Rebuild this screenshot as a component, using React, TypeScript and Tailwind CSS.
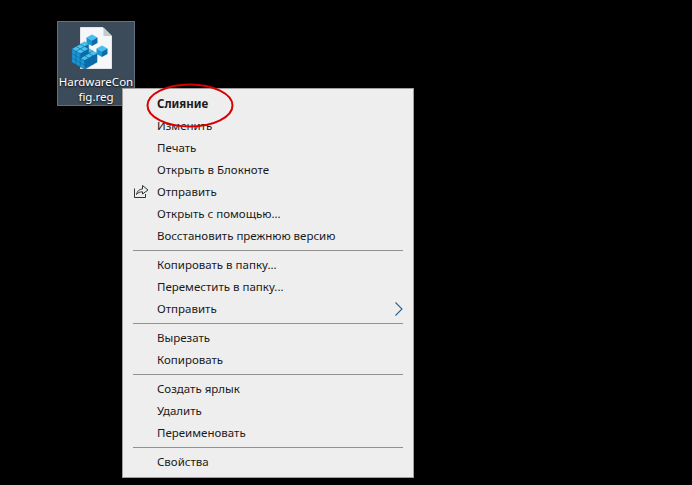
function Cube({ x, y }: { x: number; y: number }) {
  const w = 4.2
  const h = 2.4
  const v = 4.4
  return (
    <g stroke="#0a5e96" strokeWidth="0.3">
      <polygon points={`${x},${y - h} ${x + w},${y} ${x},${y + h} ${x - w},${y}`} fill="#49c3ee" />
      <polygon points={`${x - w},${y} ${x},${y + h} ${x},${y + h + v} ${x - w},${y + v}`} fill="#1b95d2" />
      <polygon points={`${x + w},${y} ${x},${y + h} ${x},${y + h + v} ${x + w},${y + v}`} fill="#0b6cab" />
    </g>
  )
}

function BigCube({ x, y }: { x: number; y: number }) {
  return (
    <g>
      <polygon points={`${x},${y - 3.5} ${x + 5.5},${y - 0.5} ${x},${y + 2.5} ${x - 5.5},${y - 0.5}`} fill="#43c0ee" />
      <polygon points={`${x - 5.5},${y - 0.5} ${x},${y + 2.5} ${x},${y + 8} ${x - 5.5},${y + 5}`} fill="#1b95d2" />
      <polygon points={`${x + 5.5},${y - 0.5} ${x},${y + 2.5} ${x},${y + 8} ${x + 5.5},${y + 5}`} fill="#0b6cab" />
    </g>
  )
}

const blocks: { a: number; b: number; z: number }[] = []
for (let z = 0; z < 3; z++) {
  for (let a = 0; a < 3; a++) {
    for (let b = 0; b < 3; b++) {
      // the top layer steps down towards the right, as in the registry logo
      if (z === 2 && a > 0 && !(a === 1 && b > 0)) continue
      blocks.push({ a, b, z })
    }
  }
}

function RegIcon() {
  return (
    <svg width="64" height="48" viewBox="0 0 64 48" className="block">
      <path d="M16.5 1.5H39L47.5 10V42.5H16.5Z" fill="#f5f7f9" stroke="#e3e6e9" />
      <path d="M39.5 2V10H47.5Z" fill="#c4cacf" />
      {blocks.map(({ a, b, z }) => (
        <Cube key={`${a}-${b}-${z}`} x={20.5 + (a - b) * 4.2} y={27 + (a + b) * 2.4 - z * 4.4} />
      ))}
      <BigCube x={28} y={12} />
      <BigCube x={38} y={23} />
    </svg>
  )
}

function ShareIcon() {
  return (
    <svg width="16" height="16" viewBox="0 0 16 16" fill="none" stroke="#333333" strokeWidth="1" className="block">
      <path d="M1.5 4.5V13.5H12.5V10" />
      <path d="M3.5 10.5C4 7 6.5 5.2 9.5 5V1.5L15 6L9.5 10V7.8C7 7.8 5 8.6 3.5 10.5Z" />
    </svg>
  )
}

function ArrowIcon() {
  return (
    <svg width="8" height="14" viewBox="0 0 8 14" fill="none" stroke="#2a628f" strokeWidth="1.1" className="ml-auto mr-[10px] block">
      <path d="M0.5 0.5L7 7L0.5 13.5" />
    </svg>
  )
}

function Item({ label, bold, icon, arrow }: { label: string; bold?: boolean; icon?: boolean; arrow?: boolean }) {
  return (
    <div className="flex h-[22px] items-center">
      <div className="w-[34px] pl-[10px]">{icon && <ShareIcon />}</div>
      <span className={bold ? "font-bold" : ""}>{label}</span>
      {arrow && <ArrowIcon />}
    </div>
  )
}

function Sep() {
  return <div className="mx-[10px] my-[3px] h-px bg-[#919191]" />
}

export default function App() {
  return (
    <div className="relative h-[485px] w-[692px] overflow-hidden bg-black font-['Noto_Sans','Open_Sans',sans-serif] text-[11.5px] text-[#1a1a1a]">
      {/* desktop icon */}
      <div className="absolute left-[57px] top-[21px] flex h-[85px] w-[78px] flex-col items-center border border-[#5f7285] bg-[#3c4b5a] pt-[4px]">
        <RegIcon />
        <div className="whitespace-nowrap text-center text-[11.5px] leading-[15px] text-white [text-shadow:0_1px_2px_rgba(0,0,0,0.9)]">
          <div>HardwareCon</div>
          <div>fig.reg</div>
        </div>
      </div>

      {/* context menu */}
      <div className="absolute left-[122px] top-[88px] w-[292px] border border-[#a0a0a0] bg-[#eeeeee] py-[4px]">
        <Item label="Слияние" bold />
        <Item label="Изменить" />
        <Item label="Печать" />
        <Item label="Открыть в Блокноте" />
        <Item label="Отправить" icon />
        <Item label="Открыть с помощью..." />
        <Item label="Восстановить прежнюю версию" />
        <Sep />
        <Item label="Копировать в папку..." />
        <Item label="Переместить в папку..." />
        <Item label="Отправить" arrow />
        <Sep />
        <Item label="Вырезать" />
        <Item label="Копировать" />
        <Sep />
        <Item label="Создать ярлык" />
        <Item label="Удалить" />
        <Item label="Переименовать" />
        <Sep />
        <Item label="Свойства" />
      </div>

      {/* red annotation ring */}
      <svg className="absolute left-[140px] top-[78px]" width="100" height="56" viewBox="0 0 100 56" fill="none">
        <ellipse cx="50" cy="27.5" rx="42.5" ry="21" stroke="#d80000" strokeWidth="2" />
      </svg>
    </div>
  )
}
